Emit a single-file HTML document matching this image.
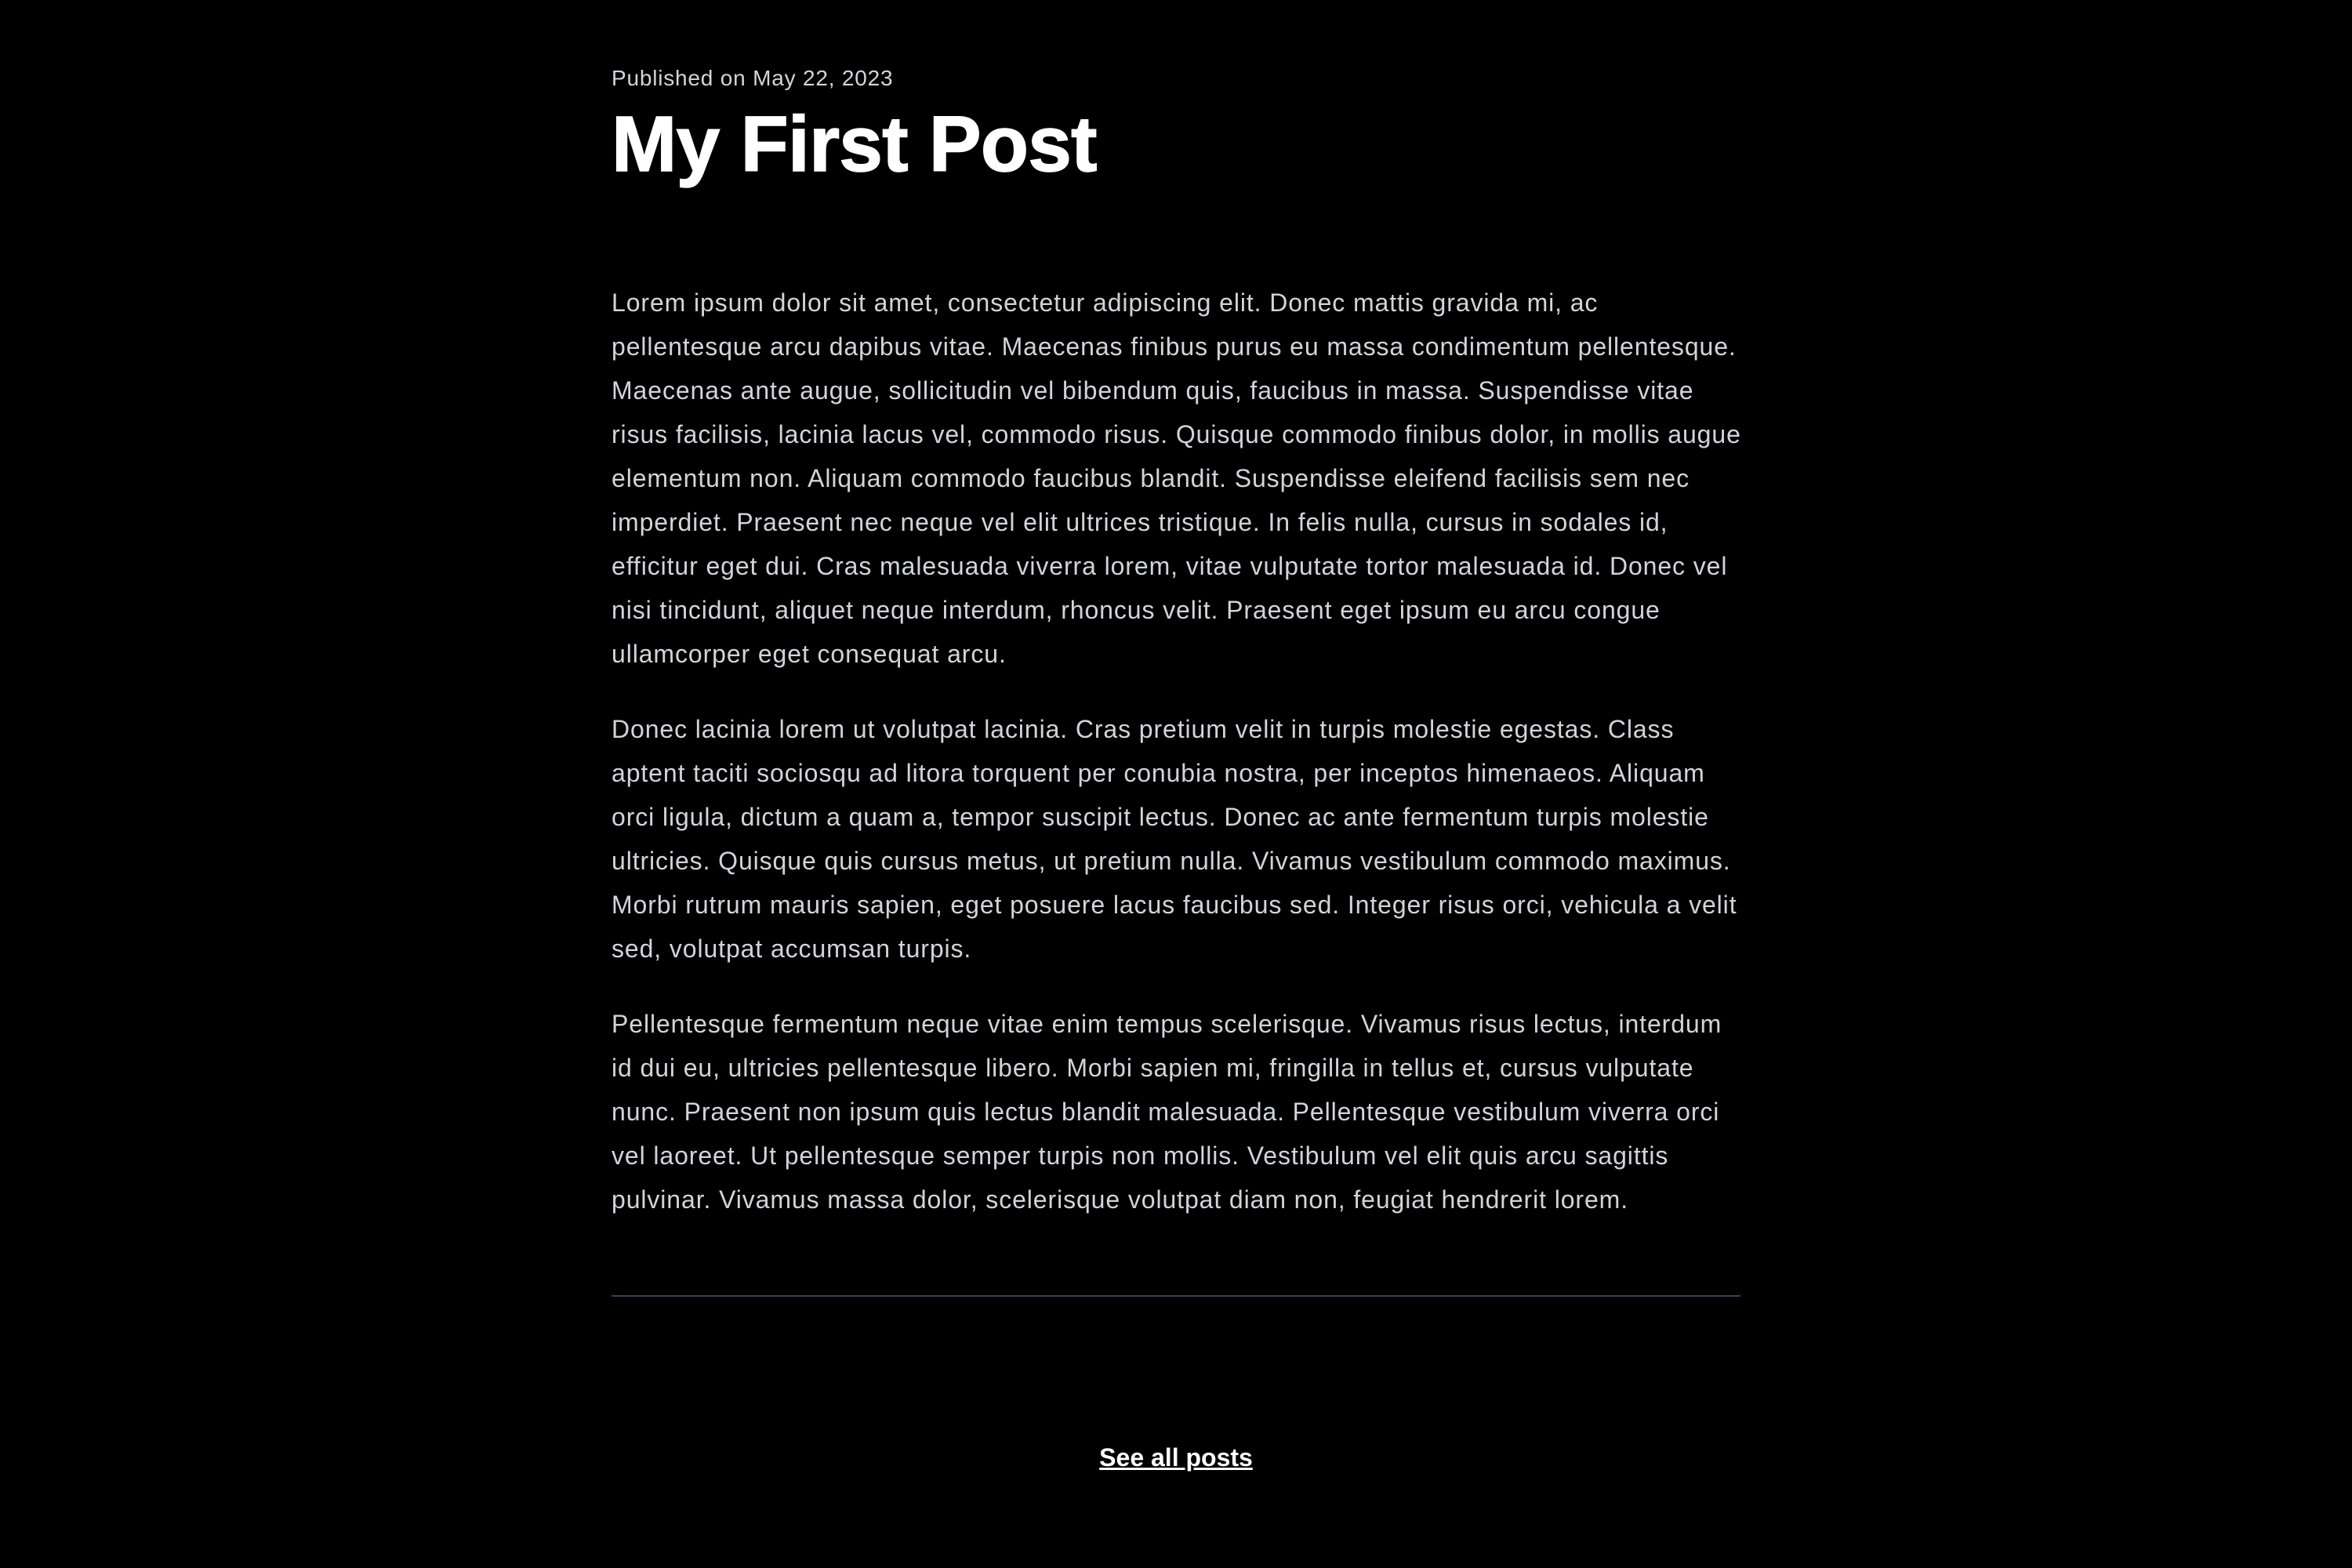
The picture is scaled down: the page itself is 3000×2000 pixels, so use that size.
<!DOCTYPE html>
<html><head><meta charset="utf-8"><style>
html,body{margin:0;padding:0;background:#000;width:3000px;height:2000px;overflow:hidden}
body{font-family:"Liberation Sans",sans-serif;position:relative}
.a{position:absolute;left:780px;white-space:nowrap}
.meta{top:80px;font-size:28px;line-height:40px;color:#d1d5db;letter-spacing:0.8px}
.title{top:126px;font-size:100px;line-height:116px;font-weight:bold;color:#fff;letter-spacing:-0.7px;-webkit-text-stroke:1.5px #fff}
.p{font-size:32px;line-height:56px;color:#d1d5db;margin:0;letter-spacing:0.9px}
hr{position:absolute;left:780px;top:1652px;width:1440px;height:2px;border:0;background:#374151;margin:0}
.see{position:absolute;left:0;width:3000px;text-align:center;top:1836px;font-size:32px;line-height:46px;font-weight:bold;color:#fff;text-decoration:underline}
</style></head><body>
<div class="a meta">Published on May 22, 2023</div>
<div class="a title">My First Post</div>
<p class="a p" style="top:358px">Lorem ipsum dolor sit amet, consectetur adipiscing elit. Donec mattis gravida mi, ac<br>pellentesque arcu dapibus vitae. Maecenas finibus purus eu massa condimentum pellentesque.<br>Maecenas ante augue, sollicitudin vel bibendum quis, faucibus in massa. Suspendisse vitae<br>risus facilisis, lacinia lacus vel, commodo risus. Quisque commodo finibus dolor, in mollis augue<br>elementum non. Aliquam commodo faucibus blandit. Suspendisse eleifend facilisis sem nec<br>imperdiet. Praesent nec neque vel elit ultrices tristique. In felis nulla, cursus in sodales id,<br>efficitur eget dui. Cras malesuada viverra lorem, vitae vulputate tortor malesuada id. Donec vel<br>nisi tincidunt, aliquet neque interdum, rhoncus velit. Praesent eget ipsum eu arcu congue<br>ullamcorper eget consequat arcu.</p>
<p class="a p" style="top:902px">Donec lacinia lorem ut volutpat lacinia. Cras pretium velit in turpis molestie egestas. Class<br>aptent taciti sociosqu ad litora torquent per conubia nostra, per inceptos himenaeos. Aliquam<br>orci ligula, dictum a quam a, tempor suscipit lectus. Donec ac ante fermentum turpis molestie<br>ultricies. Quisque quis cursus metus, ut pretium nulla. Vivamus vestibulum commodo maximus.<br>Morbi rutrum mauris sapien, eget posuere lacus faucibus sed. Integer risus orci, vehicula a velit<br>sed, volutpat accumsan turpis.</p>
<p class="a p" style="top:1278px">Pellentesque fermentum neque vitae enim tempus scelerisque. Vivamus risus lectus, interdum<br>id dui eu, ultricies pellentesque libero. Morbi sapien mi, fringilla in tellus et, cursus vulputate<br>nunc. Praesent non ipsum quis lectus blandit malesuada. Pellentesque vestibulum viverra orci<br>vel laoreet. Ut pellentesque semper turpis non mollis. Vestibulum vel elit quis arcu sagittis<br>pulvinar. Vivamus massa dolor, scelerisque volutpat diam non, feugiat hendrerit lorem.</p>
<hr>
<div class="see">See all posts</div>
</body></html>
